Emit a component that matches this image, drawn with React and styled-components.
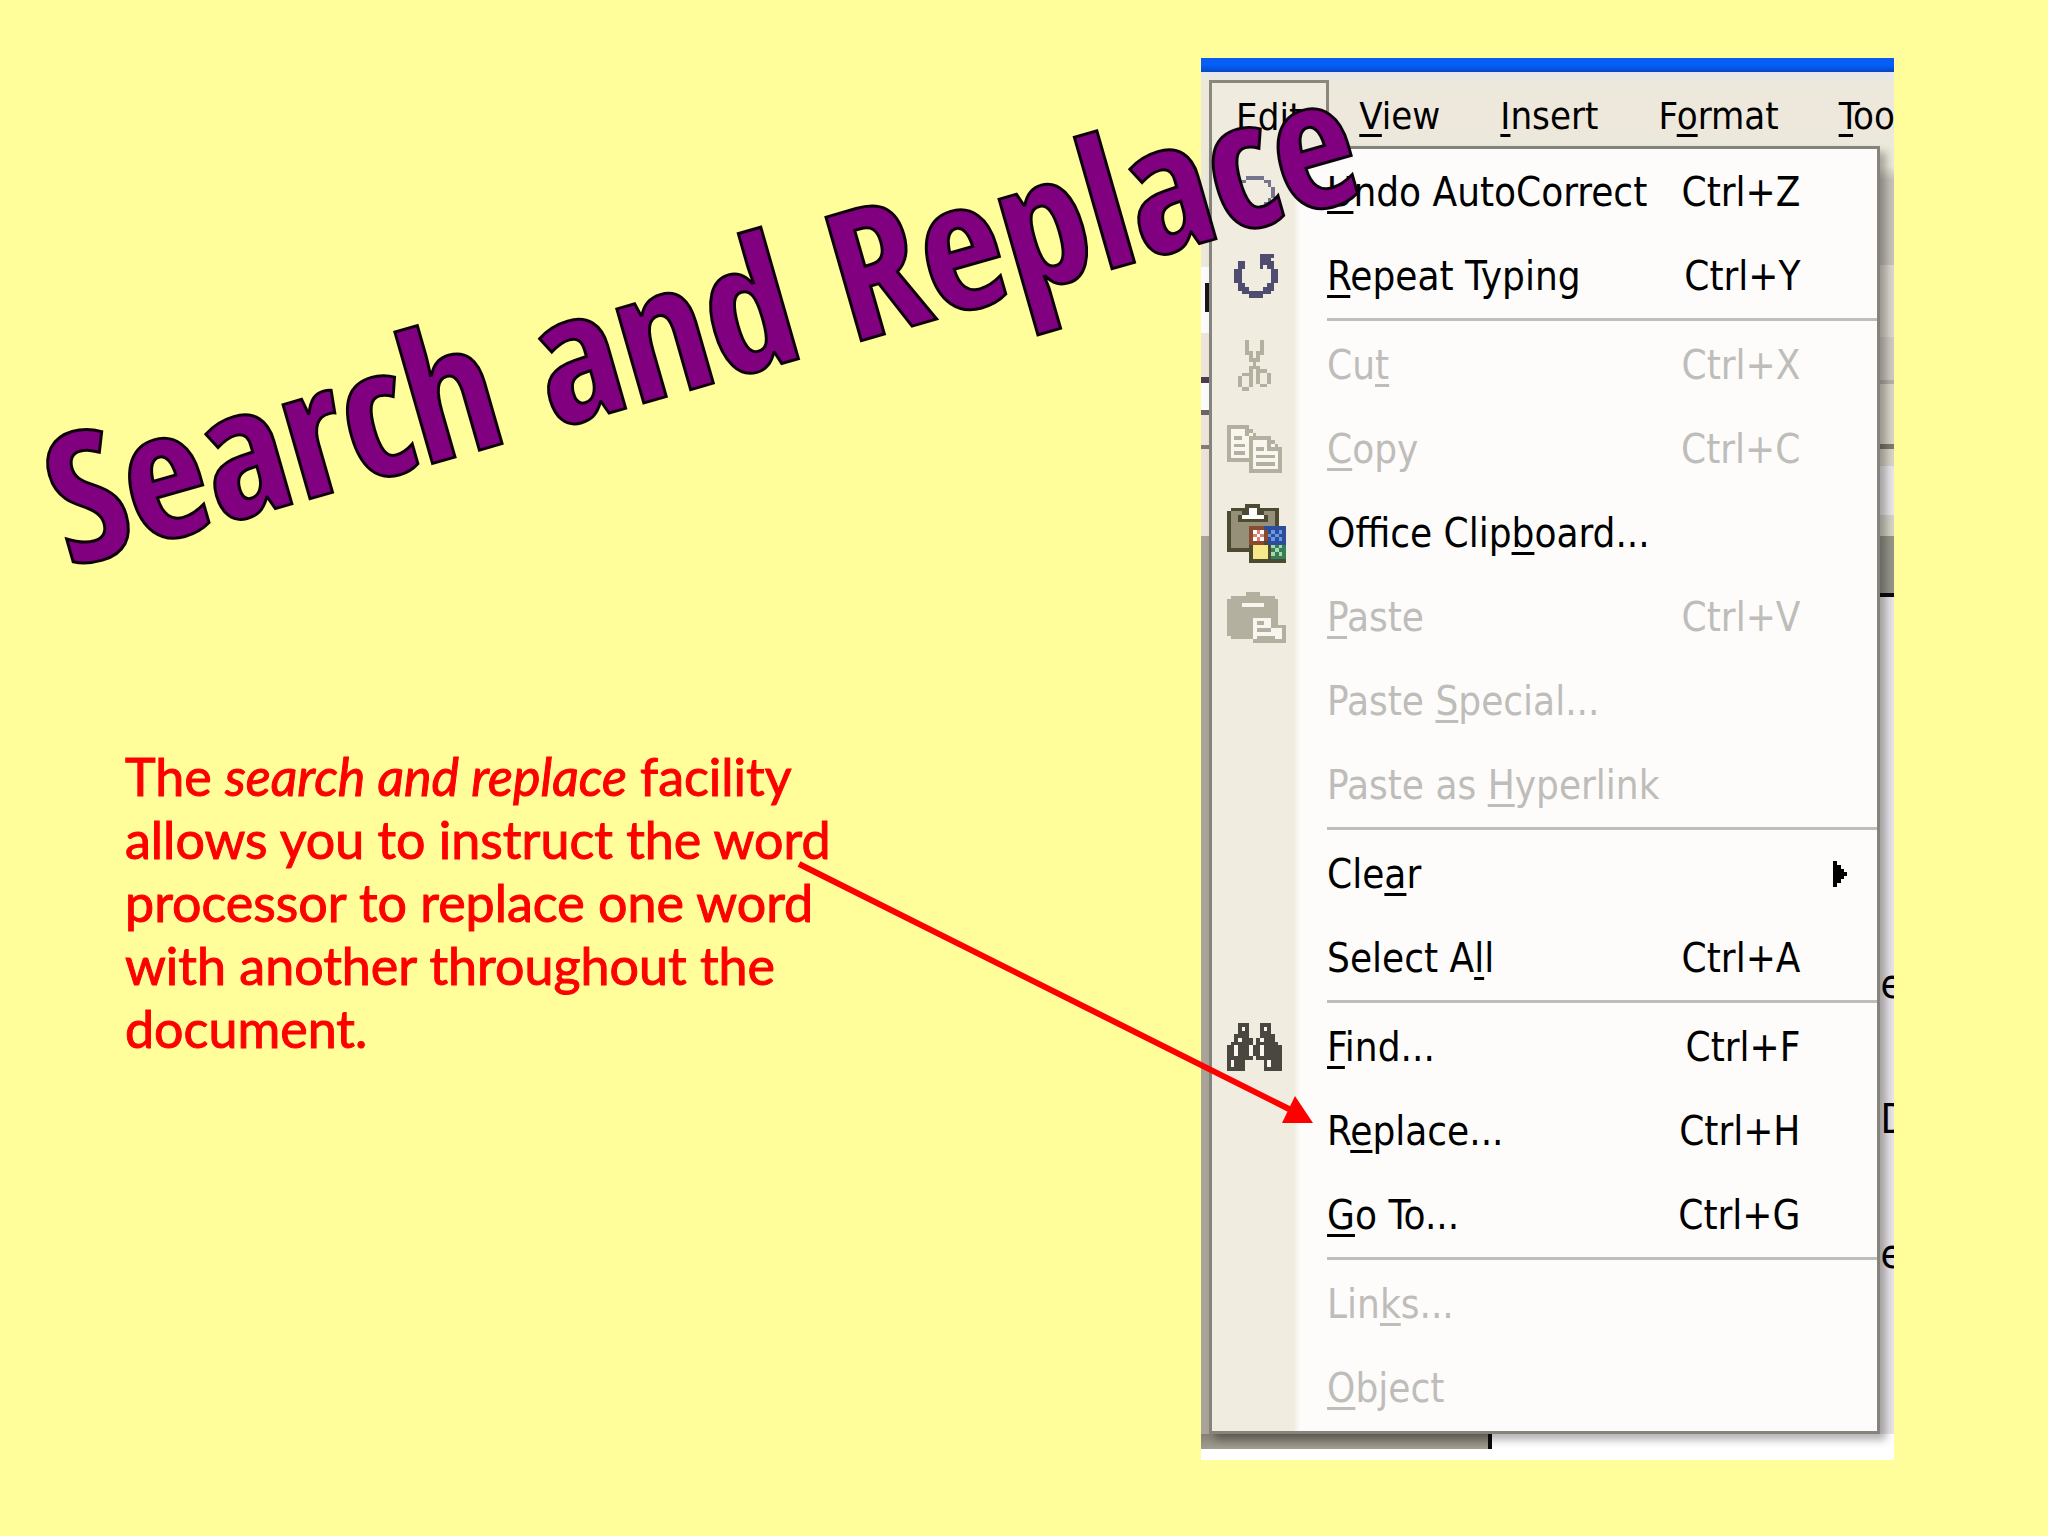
import React from 'react';
import styled, { createGlobalStyle } from 'styled-components';

const GlobalStyle = createGlobalStyle`
    body {
        margin: 0;
        background: #fffe9a;
    }

    * {
        box-sizing: border-box;
    }
`;

const menuFont = `'DejaVu Sans Condensed', 'DejaVu Sans', sans-serif`;

// slide: text on the left, screenshot of the menu on the right
const Slide = styled.main`
    min-height: 100vh;
    display: grid;
    grid-template-columns: minmax(0, 1fr) 36.6%;
    align-items: start;
    padding: 58px 7.5% 58px 0;
`;

const TextColumn = styled.section`
    padding: 348px 0 0 75px;
`;

const Title = styled.h1`
    position: relative;
    z-index: 2;
    width: max-content;
    margin: 0;
    font-family: 'Open Sans Condensed', 'Roboto Condensed', sans-serif;
    font-size: 180px;
    font-weight: 700;
    line-height: 184px;
    white-space: nowrap;
    color: #800080;
    -webkit-text-stroke: 3px #0c000c;
    transform: rotate(-16deg);
    transform-origin: left bottom;
    pointer-events: none;
`;

const Description = styled.p`
    max-width: 760px;
    margin: 155px 0 0 50px;
    font-family: Lato, sans-serif;
    font-size: 52px;
    line-height: 63px;
    color: #fe0000;
    -webkit-text-stroke: 1px #fe0000;
`;

const Figure = styled.div`
    position: relative;
`;

const Arrow = styled.svg`
    position: absolute;
    left: -402px;
    top: 806px;
    width: 520px;
    height: 270px;
    overflow: visible;
    pointer-events: none;
`;

// application window
const Window = styled.div`
    background: white;
    padding-bottom: 11px;
    overflow: hidden;
    font-family: ${menuFont};
    font-size: 40px;
`;

const TitleBar = styled.div`
    height: 14px;
    background: linear-gradient(#0a5cf0, #0360fb 50%, #0846c4);
`;

const MenuBar = styled.nav`
    height: 74px;
    display: flex;
    padding: 8px 0 0 8px;
    background: linear-gradient(#e4e8ee, #ece8da 12px, #eee8dc 80%, #ebe8dc);
`;

const MenuBarButton = styled.button`
    flex: none;
    padding: 2px 30px 0;
    border: 3px solid transparent;
    border-width: 3px 0 0;
    background: none;
    font-family: inherit;
    font-size: 38px;
    line-height: 60px;
    color: black;

    ${props => props.$open && `
        position: relative;
        z-index: 1;
        margin-bottom: -3px;
        padding: 2px 24px 0;
        border-width: 3px 3px 0;
        border-color: #8a887a;
        background: #efebdf;
    `}
`;

const Mnemonic = styled.u`
    text-decoration-thickness: 3px;
    text-underline-offset: 5px;
    text-decoration-skip-ink: none;
`;

const Body = styled.div`
    display: grid;
    grid-template-columns: 8px minmax(0, 1fr) 14px;
`;

// parts of the document window that stay visible beside the open menu
const LeftEdge = styled.div`
    background:
        linear-gradient(#1a1418, #1a1418) 4px 137px / 4px 29px no-repeat,
        linear-gradient(
            #ece9da 121px,
            #fbfafc 121px 187px,
            #efe4da 187px 231px,
            #4c3c50 231px 237px,
            #fbfafc 237px 264px,
            #6d6468 264px 269px,
            #efe4da 269px 299px,
            #837a7a 299px 303px,
            #ece2da 303px 390px,
            #aaa498 390px
        );
`;

const RightEdge = styled.div`
    padding-top: 771px;
    overflow: hidden;
    background: linear-gradient(
        #ebe8dc 20px,
        #c6c2bb 34px 119px,
        #dad6cc 119px 191px,
        #cfcbc2 191px 234px,
        #b5b1a8 234px 238px,
        #d8d4c8 238px 298px,
        #7f7a70 298px 303px,
        #d8d4c8 303px 320px,
        #e9e6ea 320px 369px,
        #d5d2c6 369px 390px,
        #95968a 390px 447px,
        #0c0c0c 447px 451px,
        #e9e4e9 451px
    );
    font-size: 40px;
    line-height: 135px;
`;

const Menu = styled.div`
    position: relative;
    display: flex;
    flex-direction: column;
    padding-bottom: 2px;
    border: 3px solid #85847c;
    background: linear-gradient(90deg, #f0ede0 82px, #fdfcfa 88px);
    box-shadow: 6px 6px 8px rgba(0, 0, 0, 0.3);
`;

const MenuItem = styled.button`
    min-height: 84px;
    display: grid;
    grid-template-columns: 115px 1fr auto;
    align-items: center;
    padding: 2px 77px 0 0;
    border: 0;
    background: none;
    font-family: inherit;
    font-size: 40px;
    line-height: 48px;
    text-align: left;
    color: black;

    &:disabled {
        color: #bebdb9;
    }
`;

const ItemWithSubmenu = styled(MenuItem)`
    padding-right: 30px;
`;

const Separator = styled.hr`
    width: calc(100% - 115px);
    height: 3px;
    margin: 1px 0 1px 115px;
    border: 0;
    background: #bfbfba;
`;

const StatusArea = styled.div`
    height: 15px;
    width: 42%;
    border-right: 4px solid #0c0c0c;
    background: linear-gradient(#857f74, #a39e92);
`;

const IconSlot = styled.span`
    padding-left: 15px;
    line-height: 0;
`;

const palettes = {
    grey: { '#': '#b3b09f', w: '#f8f6ee' },
    dark: { '#': '#4a4741', w: '#f8f6ee' },
    violet: { '#': '#504c70' },
    slate: { '#': '#74748c' },
    colour: {
        k: '#4d4a32',
        g: '#969079',
        r: '#8a4a30',
        w: '#ffffff',
        p: '#dd7f70',
        b: '#2c4c9c',
        c: '#6a98e0',
        y: '#f7e98a',
        G: '#35805a',
        m: '#a9d8a4',
    },
};

const icons = {
    undo: {
        palette: 'slate',
        offset: 2,
        rows: [
            '...#####...',
            '.##.....##.',
            '.#.......#.',
            '#.........#',
            '#.........#',
            '#.........#',
            '###......#.',
            '####....##.',
            '###....##..',
        ],
    },
    repeat: {
        palette: 'violet',
        offset: 2,
        rows: [
            '.......####.',
            '.......###..',
            '.##....####.',
            '.##....#.##.',
            '##........##',
            '##........##',
            '##........##',
            '##........##',
            '.##......##.',
            '.###....###.',
            '..########..',
            '....####....',
        ],
    },
    cut: {
        palette: 'grey',
        offset: 3,
        rows: [
            '..#...#..',
            '..#...#..',
            '..#...#..',
            '..##.##..',
            '...#.#...',
            '...###...',
            '....#....',
            '...###...',
            '...#.###.',
            '.###.#..#',
            '#..#.#..#',
            '#..#.#..#',
            '#..#..##.',
            '.##......',
        ],
    },
    copy: {
        palette: 'grey',
        offset: 0,
        rows: [
            '######.........',
            '#wwww##........',
            '#wwww#w#.......',
            '#w##ww######...',
            '#wwwww#wwww##..',
            '#w###w#wwww#w#.',
            '#wwwww#w##w####',
            '#w###w#wwwwwww#',
            '#wwwww#w#####w#',
            '#######wwwwwww#',
            '......#w#####w#',
            '......#wwwwwww#',
            '......#########',
        ],
    },
    clipboard: {
        palette: 'colour',
        offset: 0,
        rows: [
            '.....kkkk.......',
            '.kkkkkwwkkkkkk..',
            'kgggkkwwkkgggk..',
            'kggkwwwwwwkggk..',
            'kggkkkkkkkkggk..',
            'kggggggggggggk..',
            'kgggggrrrrbbbbbb',
            'kgggggrwpwrbcbcb',
            'kgggggrpwprcbcbb',
            'kgggggrwpwrbcbcb',
            'kgggggrrrrkbbbbb',
            'kgggggkyyyykmGmG',
            'kkkkkkkyyyykGmGG',
            '......kyyyykmGmG',
            '......kyyyykGGGG',
            '......kkkkkkkkkk',
        ],
    },
    paste: {
        palette: 'grey',
        offset: 0,
        rows: [
            '.....####.......',
            '.############...',
            '##############..',
            '####wwwwww####..',
            '##############..',
            '##############..',
            '##############..',
            '#######wwwww##..',
            '#######w##ww##..',
            '#######wwwww####',
            '#######w####www#',
            '#######wwwwwwww#',
            '.######w#####ww#',
            '.......#########',
        ],
    },
    find: {
        palette: 'dark',
        offset: 0,
        rows: [
            '...###...###...',
            '...#w#...#w#...',
            '...###...###...',
            '..####...####..',
            '..#w###.#w###..',
            '.######.######.',
            '##w###w##w#####',
            '##w###w##w#####',
            '##w###w##w#####',
            '#######.#######',
            '#w###.....#w###',
            '#w###.....#w###',
            '#####.....#####',
        ],
    },
};

const PIXEL = 11;

// each character in rows is one square of the icon
const PixelIcon = ({ name }) => {
    const { rows, palette, offset } = icons[name];
    const colours = palettes[palette];
    const width = Math.max(...rows.map(row => row.length)) + offset;
    return (
        <svg
            width={Math.round(width * PIXEL / 3)}
            height={Math.round(rows.length * PIXEL / 3)}
            viewBox={`0 0 ${width * PIXEL} ${rows.length * PIXEL}`}
            shapeRendering="crispEdges"
            aria-hidden="true"
        >
            {rows.map((row, y) => [...row].map((char, x) => colours[char] && (
                <rect
                    key={`${x}-${y}`}
                    x={(x + offset) * PIXEL}
                    y={y * PIXEL}
                    width={PIXEL}
                    height={PIXEL}
                    fill={colours[char]}
                />
            )))}
        </svg>
    );
};

// '_' comes before the underlined letter
const Label = ({ text }) => {
    const [before, after] = text.split('_');
    if (after === undefined) return <span>{text}</span>;
    return <span>{before}<Mnemonic>{after[0]}</Mnemonic>{after.slice(1)}</span>;
};

const menuBar = ['_Edit', '_View', '_Insert', 'F_ormat', '_Tools'];

const groups = [
    [
        { label: '_Undo AutoCorrect', keys: 'Ctrl+Z', icon: 'undo' },
        { label: '_Repeat Typing', keys: 'Ctrl+Y', icon: 'repeat' },
    ],
    [
        { label: 'Cu_t', keys: 'Ctrl+X', icon: 'cut', disabled: true },
        { label: '_Copy', keys: 'Ctrl+C', icon: 'copy', disabled: true },
        { label: 'Office Clip_board...', icon: 'clipboard' },
        { label: '_Paste', keys: 'Ctrl+V', icon: 'paste', disabled: true },
        { label: 'Paste _Special...', disabled: true },
        { label: 'Paste as _Hyperlink', disabled: true },
    ],
    [
        { label: 'Cle_ar', submenu: true },
        { label: 'Select A_ll', keys: 'Ctrl+A' },
    ],
    [
        { label: '_Find...', keys: 'Ctrl+F', icon: 'find' },
        { label: 'R_eplace...', keys: 'Ctrl+H' },
        { label: '_Go To...', keys: 'Ctrl+G' },
    ],
    [
        { label: 'Lin_ks...', disabled: true },
        { label: '_Object', disabled: true },
    ],
];

const Item = ({ label, keys, icon, disabled, submenu }) => {
    const Row = submenu ? ItemWithSubmenu : MenuItem;
    return (
        <Row type="button" role="menuitem" disabled={disabled}>
            <IconSlot>{icon && <PixelIcon name={icon} />}</IconSlot>
            <Label text={label} />
            {keys && <span>{keys}</span>}
            {submenu && (
                <svg width="14" height="26" viewBox="0 0 14 26" aria-hidden="true">
                    <path d="M0 0h4v4h4v4h3v3h3v4h-3v3H8v4H4v4H0z" />
                </svg>
            )}
        </Row>
    );
};

const App = () => (
    <Slide>
        <GlobalStyle />
        <TextColumn>
            <Title>Search and Replace</Title>
            <Description>
                The <em>search and replace</em> facility allows you to instruct the word
                processor to replace one word with another throughout the document.
            </Description>
        </TextColumn>
        <Figure>
            <Window>
                <TitleBar />
                <MenuBar>
                    {menuBar.map((text, i) => (
                        <MenuBarButton key={text} type="button" $open={i === 0}>
                            <Label text={text} />
                        </MenuBarButton>
                    ))}
                </MenuBar>
                <Body>
                    <LeftEdge />
                    <Menu role="menu">
                        {groups.map((items, i) => (
                            <React.Fragment key={i}>
                                {i > 0 && <Separator />}
                                {items.map(item => <Item key={item.label} {...item} />)}
                            </React.Fragment>
                        ))}
                    </Menu>
                    <RightEdge aria-hidden="true">
                        <div>e</div>
                        <div>D</div>
                        <div>e</div>
                    </RightEdge>
                </Body>
                <StatusArea />
            </Window>
            <Arrow viewBox="0 0 520 270" aria-hidden="true">
                <path d="M0 0L492 246" stroke="#fe0000" strokeWidth="6" />
                <path d="M514 259L496 232L483 259z" fill="#fe0000" />
            </Arrow>
        </Figure>
    </Slide>
);

export default App;
